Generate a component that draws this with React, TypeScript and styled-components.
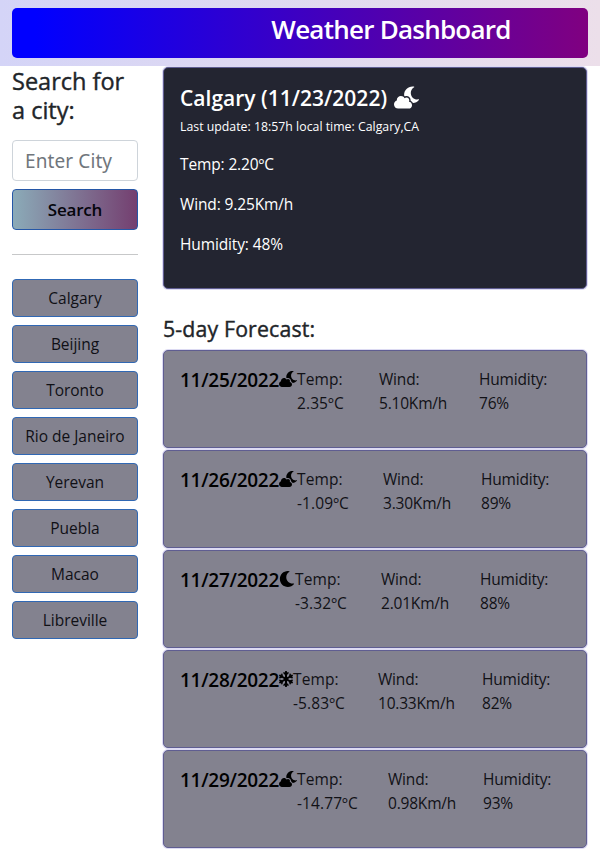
import React from "react";
import styled, { createGlobalStyle } from "styled-components";
import { FaCloudMoon, FaMoon, FaSnowflake } from "react-icons/fa";

const GlobalStyle = createGlobalStyle`
  *, *::before, *::after { box-sizing: border-box; }
  body {
    margin: 0;
    background: #fff;
    color: #212529;
    font: 400 15.5px/24px "Open Sans", "Noto Sans", sans-serif;
    letter-spacing: -0.2px;
  }
  h1, h2, h3, h4, p { margin: 0; }
`;

const Page = styled.div`
  width: 600px;
  height: 849px;
  overflow: hidden;
`;

const Header = styled.header`
  height: 66px;
  padding: 8px 12px;
  background: linear-gradient(90deg, #d4d4f7, #ecdfea);
`;

const Banner = styled.div`
  height: 50px;
  padding-left: 182px;
  border-radius: 5px;
  background: linear-gradient(90deg, #00f 4%, #800080);
`;

const Title = styled.h1`
  color: #fff;
  font-size: 26px;
  font-weight: 600;
  line-height: 43px;
  letter-spacing: -0.76px;
  text-align: center;
  white-space: nowrap;
`;

const Columns = styled.div`
  display: grid;
  grid-template-columns: 126px 424px;
  column-gap: 25px;
  padding-left: 12px;
`;

const Sidebar = styled.aside`
  display: flex;
  flex-direction: column;
  padding-top: 1px;
`;

const SearchHeading = styled.h2`
  height: 73px;
  font-size: 23.5px;
  font-weight: 500;
  line-height: 29px;
  letter-spacing: 0;
  -webkit-text-stroke: 0.4px currentColor;
`;

const CityInput = styled.input`
  width: 100%;
  height: 41px;
  padding: 0 12px;
  border: 1px solid #ced4da;
  border-radius: 4px;
  font: 400 19px "Noto Sans", sans-serif;
  letter-spacing: 0.1px;
  &::placeholder { color: #70767c; opacity: 1; }
`;

const SearchButton = styled.button`
  height: 41px;
  margin-top: 8px;
  border: 1px solid #2557a7;
  border-radius: 4px;
  background: linear-gradient(90deg, #8babb8, #743f70);
  color: #05050c;
  font: 600 17px "Open Sans", sans-serif;
  letter-spacing: -0.2px;
`;

const Divider = styled.hr`
  width: 100%;
  margin: 24px 0;
  border: 0;
  border-top: 1px solid #c7c8c9;
`;

const CityList = styled.div`
  display: flex;
  flex-direction: column;
  gap: 8px;
`;

const CityButton = styled.button`
  height: 38px;
  padding: 0;
  border: 1px solid #3068b4;
  border-radius: 4px;
  background: #83828f;
  color: #101016;
  font: 400 15.5px "Open Sans", sans-serif;
  letter-spacing: -0.02px;
  white-space: nowrap;
`;

const Main = styled.main`
  padding-top: 1px;
`;

const Card = styled.section`
  border: 1px solid #5f5d91;
  border-radius: 5px;
  box-shadow: 0 0 0 1px #dcdaf2;
`;

const CurrentCard = styled(Card)`
  height: 222px;
  padding: 16px;
  background: #232531;
  color: #fff;
`;

const CurrentTitle = styled.h2`
  display: flex;
  align-items: center;
  gap: 7px;
  height: 28px;
  font-size: 21px;
  font-weight: 600;
  letter-spacing: 0.02px;
  white-space: nowrap;
  svg {
    width: 25px;
    height: 23px;
    margin-bottom: 1px;
  }
`;

const Updated = styled.p`
  margin: 5px 0 15px;
  font-size: 12.3px;
  line-height: 20px;
  letter-spacing: 0.01px;
`;

const Reading = styled.p`
  margin-bottom: 16px;
  letter-spacing: -0.13px;
`;

const ForecastHeading = styled.h3`
  margin: 26px 0 7px;
  font-size: 21.3px;
  font-weight: 500;
  line-height: 28px;
  letter-spacing: 0.15px;
  -webkit-text-stroke: 0.4px currentColor;
`;

const ForecastList = styled.div`
  display: flex;
  flex-direction: column;
  gap: 2px;
`;

const DayCard = styled(Card)<{ $columns: string }>`
  display: grid;
  grid-template-columns: ${(p) => p.$columns};
  height: 98px;
  padding: 16px 0 0 16px;
  background: #83828f;
  color: #111116;
`;

const DayTitle = styled.h4`
  display: flex;
  align-items: center;
  height: 25px;
  color: #000;
  font-size: 19px;
  font-weight: 600;
  letter-spacing: -0.27px;
`;

const DateText = styled.span`
  flex: none;
  width: 99px;
`;

const DayIcon = styled.span<{ $width: number }>`
  display: flex;
  flex: none;
  margin-bottom: 2px;
  svg {
    width: ${(p) => p.$width}px;
    height: 16px;
  }
`;

const Metric = styled.p<{ $spacing?: number }>`
  white-space: pre-line;
  letter-spacing: ${(p) => p.$spacing ?? -0.2}px;
`;

const cities = ["Calgary", "Beijing", "Toronto", "Rio de Janeiro", "Yerevan", "Puebla", "Macao", "Libreville"];

const days = [
  { date: "11/25/2022", Icon: FaCloudMoon, iconWidth: 18, temp: "2.35", wind: "5.10", humidity: 76, columns: "117px 82px 100px 1fr" },
  { date: "11/26/2022", Icon: FaCloudMoon, iconWidth: 18, temp: "-1.09", wind: "3.30", humidity: 89, columns: "117px 86px 98px 1fr" },
  { date: "11/27/2022", Icon: FaMoon, iconWidth: 16, temp: "-3.32", wind: "2.01", humidity: 88, columns: "115px 86px 99px 1fr" },
  { date: "11/28/2022", Icon: FaSnowflake, iconWidth: 14, temp: "-5.83", wind: "10.33", humidity: 82, columns: "113px 85px 104px 1fr" },
  { date: "11/29/2022", Icon: FaCloudMoon, iconWidth: 18, temp: "-14.77", wind: "0.98", humidity: 93, columns: "117px 91px 95px 1fr" },
];

export default function App() {
  return (
    <Page>
      <GlobalStyle />
      <Header>
        <Banner>
          <Title>Weather Dashboard</Title>
        </Banner>
      </Header>
      <Columns>
        <Sidebar>
          <SearchHeading>Search for a city:</SearchHeading>
          <CityInput placeholder="Enter City" />
          <SearchButton>Search</SearchButton>
          <Divider />
          <CityList>
            {cities.map((city) => (
              <CityButton key={city}>{city}</CityButton>
            ))}
          </CityList>
        </Sidebar>
        <Main>
          <CurrentCard>
            <CurrentTitle>
              <span>Calgary (11/23/2022)</span>
              <FaCloudMoon />
            </CurrentTitle>
            <Updated>Last update: 18:57h local time: Calgary,CA</Updated>
            <Reading>Temp: 2.20ºC</Reading>
            <Reading>Wind: 9.25Km/h</Reading>
            <Reading>Humidity: 48%</Reading>
          </CurrentCard>
          <ForecastHeading>5-day Forecast:</ForecastHeading>
          <ForecastList>
            {days.map(({ date, Icon, iconWidth, temp, wind, humidity, columns }) => (
              <DayCard key={date} $columns={columns}>
                <DayTitle>
                  <DateText>{date}</DateText>
                  <DayIcon $width={iconWidth}>
                    <Icon />
                  </DayIcon>
                </DayTitle>
                <Metric $spacing={0.1}>{`Temp:\n${temp}ºC`}</Metric>
                <Metric>{`Wind:\n${wind}Km/h`}</Metric>
                <Metric>{`Humidity:\n${humidity}%`}</Metric>
              </DayCard>
            ))}
          </ForecastList>
        </Main>
      </Columns>
    </Page>
  );
}
